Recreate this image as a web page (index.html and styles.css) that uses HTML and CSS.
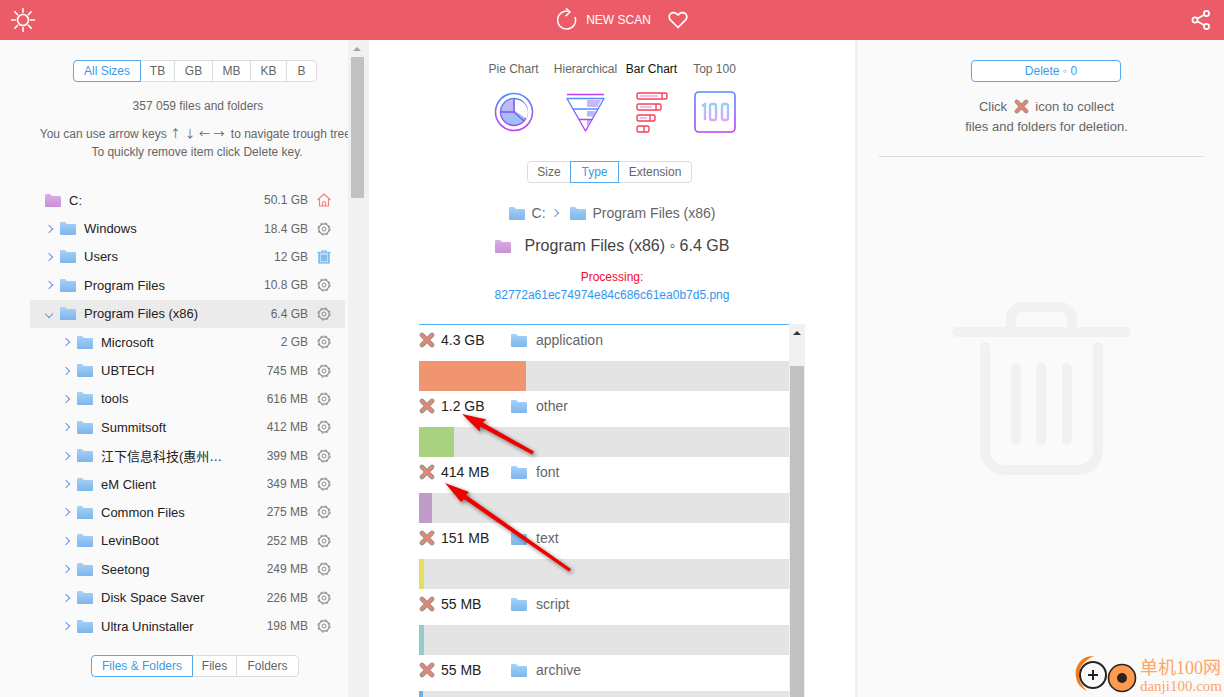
FILE: index.html
```html
<!DOCTYPE html>
<html lang="en">

<head>
    <meta charset="UTF-8">
    <meta name="viewport" content="width=device-width, initial-scale=1.0">
    <title>Disk Usage</title>
    <link rel="stylesheet" href="styles.css">
</head>

<body>
    <svg width="0" height="0" class="defs">
        <defs>
            <linearGradient id="folderBlue" x1="0" y1="0" x2="0" y2="1">
                <stop offset="0" stop-color="#a6d2f8" />
                <stop offset="1" stop-color="#7db5ec" />
            </linearGradient>
            <linearGradient id="folderPurple" x1="0" y1="0" x2="0" y2="1">
                <stop offset="0" stop-color="#dcb0e4" />
                <stop offset="1" stop-color="#c690d6" />
            </linearGradient>
            <linearGradient id="blueViolet" x1="0" y1="0" x2="0" y2="1">
                <stop offset="0" stop-color="#4f8dff" />
                <stop offset="1" stop-color="#c23cf2" />
            </linearGradient>
            <linearGradient id="fillSoft" x1="0" y1="0" x2="0" y2="1">
                <stop offset="0" stop-color="#d6b4f6" />
                <stop offset="1" stop-color="#8cc4fa" />
            </linearGradient>
            <linearGradient id="textSoft" x1="0" y1="0" x2="0" y2="1">
                <stop offset="0" stop-color="#8ed2fa" />
                <stop offset="1" stop-color="#dba8f6" />
            </linearGradient>
            <symbol id="folder" viewBox="0 0 16 13">
                <path d="M0 1a1 1 0 0 1 1-1h4l2 2h8a1 1 0 0 1 1 1v9a1 1 0 0 1-1 1H1a1 1 0 0 1-1-1z" />
            </symbol>
            <symbol id="gear" viewBox="0 0 14 14">
                <circle cx="7" cy="7" r="5.2" fill="none" stroke="#8c8c8c" stroke-width="1.2" />
                <circle cx="7" cy="7" r="6.1" fill="none" stroke="#8c8c8c" stroke-width="1" stroke-dasharray="2.4 2.4" />
                <circle cx="7" cy="7" r="2" fill="none" stroke="#8c8c8c" stroke-width="1" />
            </symbol>
            <symbol id="cross" viewBox="0 0 16 16">
                <path d="M3 3l10 10M13 3L3 13" stroke="#9a8f8d" stroke-width="4.6" stroke-linecap="round" fill="none" />
                <path d="M3 3l10 10M13 3L3 13" stroke="#e58672" stroke-width="2.8" stroke-linecap="round" fill="none" />
            </symbol>
        </defs>
    </svg>

    <header class="topbar">
        <svg class="sun" width="26" height="26" viewBox="0 0 26 26" fill="none" stroke="#fff" stroke-width="1.6" stroke-linecap="round">
            <circle cx="13" cy="13" r="5.5" />
            <path d="M13 1.5v4M13 20.5v4M1.5 13h4M20.5 13h4M4.9 4.9l2.8 2.8M18.3 18.3l2.8 2.8M4.9 21.100l2.8-2.8M18.3 7.700l2.8-2.8" />
        </svg>
        <div class="scan">
            <svg width="20" height="24" viewBox="0 0 20 24" fill="none" stroke="#fff" stroke-width="1.5" stroke-linecap="round" stroke-linejoin="round">
                <path d="M12 3.4A9 9 0 1 0 18.2 9.5" />
                <path d="M9.5 0.7L13 4L9 7.7" />
            </svg>
            <span>NEW SCAN</span>
            <svg class="heart" width="20" height="18" viewBox="0 0 20 18" fill="none" stroke="#fff" stroke-width="1.7" stroke-linejoin="round">
                <path d="M10 16.5L2.6 9.2C.6 7.2.8 4.3 2.6 2.7 4.5 1 7.5 1.2 10 4c2.5-2.8 5.5-3 7.4-1.3 1.8 1.6 2 4.5 0 6.5z" />
            </svg>
        </div>
        <svg class="share" width="20" height="20" viewBox="0 0 20 20" fill="none" stroke="#fff" stroke-width="1.7">
            <circle cx="15.5" cy="3.5" r="2.6" />
            <circle cx="4" cy="10" r="2.6" />
            <circle cx="15.5" cy="16.5" r="2.6" />
            <path d="M13.3 4.8L6.2 8.7M6.2 11.3l7.1 3.9" />
        </svg>
    </header>

    <main class="layout">
        <aside class="left">
            <div class="left-inner">
                <div class="group sizes">
                    <span class="seg active w68">All Sizes</span>
                    <span class="seg w34">TB</span>
                    <span class="seg w38">GB</span>
                    <span class="seg w38">MB</span>
                    <span class="seg w36">KB</span>
                    <span class="seg w30">B</span>
                </div>
                <p class="count">357 059 files and folders</p>
                <p class="hint">You can use arrow keys <span class="keys">↑ ↓ ← →</span> to navigate trough tree.<br>To quickly remove item click Delete key.</p>

                <div class="tree">
                    <div class="row root">
                        <svg class="folder"><use href="#folder" fill="url(#folderPurple)" /></svg>
                        <span class="name">C:</span><span class="size">50.1 GB</span>
                        <svg class="act" viewBox="0 0 14 14" fill="none" stroke="#f27f84" stroke-width="1.1">
                            <path d="M0.5 7L7 1l6.5 6M2.5 6v7h9V6M5.5 13V10a1.5 1.5 0 0 1 3 0v3" />
                        </svg>
                    </div>
                    <div class="row lvl1"><i class="chev"></i><svg class="folder"><use href="#folder" fill="url(#folderBlue)" /></svg><span class="name">Windows</span><span class="size">18.4 GB</span><svg class="act"><use href="#gear" /></svg></div>
                    <div class="row lvl1"><i class="chev"></i><svg class="folder"><use href="#folder" fill="url(#folderBlue)" /></svg><span class="name">Users</span><span class="size">12 GB</span>
                        <svg class="act" viewBox="0 0 14 14" fill="none" stroke="#5aa9ec" stroke-width="1.2">
                            <path d="M0.5 2.5h13M5 2.5V1h4v1.5" />
                            <path d="M2 2.5V13h10V2.5" fill="#bcdcf8" />
                            <path d="M5 5v6M7 5v6M9 5v6" />
                        </svg>
                    </div>
                    <div class="row lvl1"><i class="chev"></i><svg class="folder"><use href="#folder" fill="url(#folderBlue)" /></svg><span class="name">Program Files</span><span class="size">10.8 GB</span><svg class="act"><use href="#gear" /></svg></div>
                    <div class="row lvl1 selected"><i class="chev open"></i><svg class="folder"><use href="#folder" fill="url(#folderBlue)" /></svg><span class="name">Program Files (x86)</span><span class="size">6.4 GB</span><svg class="act"><use href="#gear" /></svg></div>
                    <div class="row lvl2"><i class="chev"></i><svg class="folder"><use href="#folder" fill="url(#folderBlue)" /></svg><span class="name">Microsoft</span><span class="size">2 GB</span><svg class="act"><use href="#gear" /></svg></div>
                    <div class="row lvl2"><i class="chev"></i><svg class="folder"><use href="#folder" fill="url(#folderBlue)" /></svg><span class="name">UBTECH</span><span class="size">745 MB</span><svg class="act"><use href="#gear" /></svg></div>
                    <div class="row lvl2"><i class="chev"></i><svg class="folder"><use href="#folder" fill="url(#folderBlue)" /></svg><span class="name">tools</span><span class="size">616 MB</span><svg class="act"><use href="#gear" /></svg></div>
                    <div class="row lvl2"><i class="chev"></i><svg class="folder"><use href="#folder" fill="url(#folderBlue)" /></svg><span class="name">Summitsoft</span><span class="size">412 MB</span><svg class="act"><use href="#gear" /></svg></div>
                    <div class="row lvl2"><i class="chev"></i><svg class="folder"><use href="#folder" fill="url(#folderBlue)" /></svg><span class="name cjk">江下信息科技(惠州…</span><span class="size">399 MB</span><svg class="act"><use href="#gear" /></svg></div>
                    <div class="row lvl2"><i class="chev"></i><svg class="folder"><use href="#folder" fill="url(#folderBlue)" /></svg><span class="name">eM Client</span><span class="size">349 MB</span><svg class="act"><use href="#gear" /></svg></div>
                    <div class="row lvl2"><i class="chev"></i><svg class="folder"><use href="#folder" fill="url(#folderBlue)" /></svg><span class="name">Common Files</span><span class="size">275 MB</span><svg class="act"><use href="#gear" /></svg></div>
                    <div class="row lvl2"><i class="chev"></i><svg class="folder"><use href="#folder" fill="url(#folderBlue)" /></svg><span class="name">LevinBoot</span><span class="size">252 MB</span><svg class="act"><use href="#gear" /></svg></div>
                    <div class="row lvl2"><i class="chev"></i><svg class="folder"><use href="#folder" fill="url(#folderBlue)" /></svg><span class="name">Seetong</span><span class="size">249 MB</span><svg class="act"><use href="#gear" /></svg></div>
                    <div class="row lvl2"><i class="chev"></i><svg class="folder"><use href="#folder" fill="url(#folderBlue)" /></svg><span class="name">Disk Space Saver</span><span class="size">226 MB</span><svg class="act"><use href="#gear" /></svg></div>
                    <div class="row lvl2"><i class="chev"></i><svg class="folder"><use href="#folder" fill="url(#folderBlue)" /></svg><span class="name">Ultra Uninstaller</span><span class="size">198 MB</span><svg class="act"><use href="#gear" /></svg></div>
                </div>

                <div class="group kinds">
                    <span class="seg active w102">Files &amp; Folders</span>
                    <span class="seg w44">Files</span>
                    <span class="seg w62">Folders</span>
                </div>
            </div>
        </aside>

        <div class="vscroll tree-scroll">
            <span class="up"></span>
            <span class="thumb"></span>
        </div>

        <section class="center">
            <div class="charts">
                <div class="chart w72">
                    <span>Pie Chart</span>
                    <svg width="42" height="42" viewBox="0 0 42 42" fill="none">
                        <circle cx="21" cy="21" r="18.5" stroke="url(#blueViolet)" stroke-width="1.6" />
                        <circle cx="21" cy="21" r="13.5" fill="url(#fillSoft)" stroke="url(#blueViolet)" stroke-width="1.4" />
                        <path d="M22 8.5a13 13 0 0 1 11.500 19L22 20z" fill="#fff" />
                        <path d="M21 7.5V21H7.5M21 21l10 9" stroke="#7a58ee" stroke-width="1.4" />
                    </svg>
                </div>
                <div class="chart w72">
                    <span>Hierarchical</span>
                    <svg width="42" height="42" viewBox="0 0 42 42" fill="none">
                        <path d="M2 3.5h37" stroke="#c23cf2" stroke-width="1.4" />
                        <path d="M22 9h14l-3.500 7H22zM22 20h8.500l-2.500 5.500H22zM22 28h4l-3 6h-1z" fill="url(#fillSoft)" />
                        <path d="M2 7.5h37L20.5 40z" stroke="url(#blueViolet)" stroke-width="1.4" stroke-linejoin="round" />
                        <path d="M8 18h25M14 28.5h13" stroke="url(#blueViolet)" stroke-width="1.4" />
                    </svg>
                </div>
                <div class="chart w60">
                    <span class="on">Bar Chart</span>
                    <svg width="32" height="42" viewBox="0 0 32 42" fill="none" stroke="#f8405a" stroke-width="1.4">
                        <rect x="1" y="2" width="30" height="6" rx="1.5" />
                        <path d="M26 2v6" />
                        <path d="M4 5h18" stroke="#f0a0e8" />
                        <rect x="1" y="13" width="24" height="6" rx="1.5" />
                        <path d="M20 13v6" />
                        <path d="M4 16h12" stroke="#f0a0e8" />
                        <rect x="1" y="24" width="18" height="6" rx="1.5" />
                        <path d="M14 24v6" />
                        <path d="M4 27h7" stroke="#f0a0e8" />
                        <rect x="1" y="35" width="12" height="6" rx="1.5" />
                        <path d="M8 35v6" />
                    </svg>
                </div>
                <div class="chart w66">
                    <span>Top 100</span>
                    <svg width="42" height="42" viewBox="0 0 42 42" fill="none">
                        <rect x="1" y="1" width="40" height="40" rx="4" stroke="url(#blueViolet)" stroke-width="1.6" />
                        <path d="M8 15l3-2v16M18 13h2a2 2 0 0 1 2 2v12a2 2 0 0 1-2 2h-2a2 2 0 0 1-2-2V15a2 2 0 0 1 2-2zM30 13h2a2 2 0 0 1 2 2v12a2 2 0 0 1-2 2h-2a2 2 0 0 1-2-2V15a2 2 0 0 1 2-2z" stroke="url(#textSoft)" stroke-width="2.4" />
                    </svg>
                </div>
            </div>

            <div class="group modes">
                <span class="seg w43">Size</span>
                <span class="seg active w48">Type</span>
                <span class="seg w73">Extension</span>
            </div>

            <div class="crumbs">
                <svg class="folder"><use href="#folder" fill="url(#folderBlue)" /></svg>
                <span class="crumb-c">C:</span>
                <i class="chev"></i>
                <svg class="folder"><use href="#folder" fill="url(#folderBlue)" /></svg>
                <span>Program Files (x86)</span>
            </div>
            <h2 class="title">
                <svg class="folder"><use href="#folder" fill="url(#folderPurple)" /></svg>
                <span>Program Files (x86) ◦ 6.4 GB</span>
            </h2>
            <p class="processing">Processing:</p>
            <p class="filename">82772a61ec74974e84c686c61ea0b7d5.png</p>

            <div class="listwrap">
                <div class="list">
                    <div class="item"><svg class="x"><use href="#cross" /></svg><span class="amount">4.3 GB</span><svg class="folder"><use href="#folder" fill="url(#folderBlue)" /></svg><span class="kind">application</span></div>
                    <div class="bar"><div class="fill c1"></div></div>
                    <div class="item"><svg class="x"><use href="#cross" /></svg><span class="amount">1.2 GB</span><svg class="folder"><use href="#folder" fill="url(#folderBlue)" /></svg><span class="kind">other</span></div>
                    <div class="bar"><div class="fill c2"></div></div>
                    <div class="item"><svg class="x"><use href="#cross" /></svg><span class="amount">414 MB</span><svg class="folder"><use href="#folder" fill="url(#folderBlue)" /></svg><span class="kind">font</span></div>
                    <div class="bar"><div class="fill c3"></div></div>
                    <div class="item"><svg class="x"><use href="#cross" /></svg><span class="amount">151 MB</span><svg class="folder"><use href="#folder" fill="url(#folderBlue)" /></svg><span class="kind">text</span></div>
                    <div class="bar"><div class="fill c4"></div></div>
                    <div class="item"><svg class="x"><use href="#cross" /></svg><span class="amount">55 MB</span><svg class="folder"><use href="#folder" fill="url(#folderBlue)" /></svg><span class="kind">script</span></div>
                    <div class="bar"><div class="fill c5"></div></div>
                    <div class="item"><svg class="x"><use href="#cross" /></svg><span class="amount">55 MB</span><svg class="folder"><use href="#folder" fill="url(#folderBlue)" /></svg><span class="kind">archive</span></div>
                    <div class="bar"><div class="fill c6"></div></div>
                </div>
                <div class="vscroll list-scroll">
                    <span class="up"></span>
                    <span class="thumb"></span>
                </div>
            </div>
        </section>

        <div class="divider"></div>

        <aside class="right">
            <button class="delete">Delete ◦ 0</button>
            <p class="collect">Click <svg class="x inline"><use href="#cross" /></svg> icon to collect<br>files and folders for deletion.</p>
            <hr class="rule">
            <svg class="bin" width="180" height="175" viewBox="0 0 180 175" fill="none" stroke="#f1f1f1" stroke-width="10" stroke-linecap="round">
                <path d="M5 30H174" />
                <path d="M59 27V17a12 12 0 0 1 12-12h37a12 12 0 0 1 12 12v10" />
                <path d="M33 45v103a20 20 0 0 0 20 20h73a20 20 0 0 0 20-20V45" />
                <path d="M64 66v72M89 66v72M115 66v72" />
            </svg>
        </aside>
    </main>

    <!-- red arrows drawn over the screenshot -->
    <svg class="arrows" width="1224" height="697" viewBox="0 0 1224 697">
        <path d="M462 414L486.4 419.4L482.6 422.5L534 451.4L532.2 454.6L480.2 426.6L479.6 431.6z" fill="#f20000" />
        <path d="M445 483L469 492L466 495L571 569L569 571.5L464 499L461 502z" fill="#f20000" />
    </svg>

    <div class="mark">
        <svg width="64" height="42" viewBox="0 0 64 42" fill="none">
            <path d="M19 1C6 0-1 12 1 22c1 7 5 11 11 14-5-5-8-10-8-16 0-9 6-15 15-19z" fill="#f47a16" />
            <circle cx="18" cy="20" r="13" stroke="#2a2320" stroke-width="2" />
            <path d="M18 15v10M13 20h10" stroke="#2a2320" stroke-width="2" />
            <circle cx="47" cy="23" r="13.5" fill="#ff9a4f" stroke="#2a2320" stroke-width="1.6" />
            <circle cx="47" cy="23" r="5" fill="#2a2320" />
        </svg>
        <div class="mark-text">
            <span class="mark-cn">单机100网</span>
            <span class="mark-en">danji100.com</span>
        </div>
    </div>
</body>

</html>
```

FILE: styles.css
```css
* {
    box-sizing: border-box;
}

html,
body {
    margin: 0;
    height: 100%;
    overflow: hidden;
}

body {
    font-family: "Liberation Sans", Arial, "Noto Sans CJK SC", sans-serif;
    font-size: 12px;
    color: #666;
    background: #fff;
}

p {
    margin: 0;
}

.defs {
    position: absolute;
}

/* top bar */
.topbar {
    height: 40px;
    background-color: #ec5c68;
    display: flex;
    align-items: center;
    justify-content: space-between;
    padding: 0 10px;
}

.scan {
    display: flex;
    align-items: center;
    color: #fff;
    font-size: 12px;
    margin-left: 18px;
}

.scan span {
    margin: 0 17px 0 9px;
}

.share {
    margin: 0 3px 1px 0;
}

/* columns */
.layout {
    display: flex;
    height: 657px;
}

.left {
    width: 348px;
    background: #fafafa;
    overflow: hidden;
    flex: none;
}

.left-inner {
    margin-left: 30px;
    width: 315px;
    padding-top: 20px;
}

.group {
    display: flex;
    height: 22px;
    width: fit-content;
    border-radius: 4px;
    background: #fff;
}

.seg {
    display: flex;
    align-items: center;
    justify-content: center;
    border: 1px solid #ddd;
    margin-left: -1px;
}

.seg:first-child {
    margin-left: 0;
    border-radius: 4px 0 0 4px;
}

.seg:last-child {
    border-radius: 0 4px 4px 0;
}

.seg.active {
    color: #3d9ae8;
    border-color: #55a9ee;
    position: relative;
}

.w30 { width: 31px; }
.w34 { width: 35px; }
.w36 { width: 37px; }
.w38 { width: 39px; }
.w43 { width: 44px; }
.w44 { width: 45px; }
.w48 { width: 49px; }
.w62 { width: 63px; }
.w68 { width: 68px; }
.w73 { width: 74px; }
.w102 { width: 102px; }

.sizes {
    margin-left: 43px;
}

.count {
    width: 336px;
    text-align: center;
    margin-top: 17px;
    line-height: 14px;
}

.hint {
    width: 334px;
    text-align: center;
    white-space: nowrap;
    margin-top: 11px;
    line-height: 18px;
}

.keys {
    font-family: "Noto Sans CJK SC", sans-serif;
    font-size: 11px;
    word-spacing: 1px;
    margin-right: 3px;
}

/* tree */
.tree {
    margin-top: 25px;
}

.row {
    display: flex;
    align-items: center;
    height: 28.4px;
    color: #222;
    font-size: 13px;
}

.row.selected {
    background: #ebebeb;
}

.folder {
    width: 16px;
    height: 13px;
    flex: none;
}

.name {
    flex: 1;
    white-space: nowrap;
    overflow: hidden;
}

.size {
    font-size: 12px;
    color: #666;
}

.act {
    width: 14px;
    height: 14px;
    margin: 0 14px 0 9px;
    flex: none;
}

.root {
    padding-left: 15px;
}

.root .name {
    margin-left: 8px;
}

.lvl1 {
    padding-left: 16px;
}

.lvl2 {
    padding-left: 33px;
}

.lvl1 .folder,
.lvl2 .folder {
    margin-left: 6px;
}

.lvl1 .name,
.lvl2 .name {
    margin-left: 8px;
}

.cjk {
    font-family: "Liberation Sans", "Noto Sans CJK SC", sans-serif;
}

.chev {
    display: block;
    width: 6px;
    height: 6px;
    margin-right: 2px;
    border-top: 1px solid #6b94e0;
    border-right: 1px solid #6b94e0;
    transform: rotate(45deg);
    flex: none;
}

.chev.open {
    transform: rotate(135deg);
}

.kinds {
    margin: 15px 0 0 61px;
}

/* scrollbars */
.vscroll {
    background: #f1f1f1;
    flex: none;
    display: flex;
    flex-direction: column;
    align-items: center;
}

.up {
    width: 0;
    height: 0;
    border-left: 4px solid transparent;
    border-right: 4px solid transparent;
    border-bottom: 4px solid #a3a3a3;
}

.thumb {
    display: block;
    background: #c1c1c1;
}

.tree-scroll {
    width: 21px;
    padding-top: 7px;
}

.tree-scroll .thumb {
    width: 13px;
    height: 141px;
    margin: 6px 3px 0 0;
}

.tree-scroll .up {
    margin-right: 3px;
}

.list-scroll {
    width: 16px;
    padding-top: 7px;
}

.list-scroll .up {
    border-bottom-color: #333;
}

.list-scroll .thumb {
    width: 14px;
    flex: 1;
    margin-top: 31px;
}

/* center */
.center {
    width: 486px;
    flex: none;
    background: #fff;
    display: flex;
    flex-direction: column;
    align-items: center;
    overflow: hidden;
}

.charts {
    display: flex;
    margin-top: 22px;
    margin-left: 1px;
}

.chart {
    display: flex;
    flex-direction: column;
    align-items: center;
    white-space: nowrap;
    line-height: 14px;
}

.chart span.on {
    color: #111;
}

.chart svg {
    margin-top: 15px;
}

.chart.w72 { width: 72px; }
.chart.w60 { width: 60px; }
.chart.w66 { width: 66px; }

.modes {
    margin: 28px 0 0 -5px;
}

.crumbs {
    display: flex;
    align-items: center;
    font-size: 14px;
    margin-top: 21px;
    height: 18px;
    margin-left: 0;
}

.crumb-c {
    margin: 0 7px;
}

.crumbs .chev {
    margin-right: 12px;
    margin-left: -1px;
}

.crumbs .folder + span:last-child {
    margin-left: 7px;
}

.title {
    display: flex;
    align-items: center;
    font-size: 16px;
    font-weight: normal;
    color: #444;
    margin: 15px 0 0;
    height: 18px;
}

.title span {
    margin-left: 14px;
}

.processing {
    color: #fa0a2a;
    margin-top: 15px;
    line-height: 14px;
}

.filename {
    color: #2f96ee;
    margin-top: 4px;
    line-height: 14px;
}

.listwrap {
    display: flex;
    width: 386px;
    margin-top: 22px;
    flex: 1;
    min-height: 0;
    align-self: flex-start;
    margin-left: 50px;
}

.list {
    width: 370px;
    border-top: 1px solid #55b0f5;
    overflow: hidden;
}

.item {
    display: flex;
    align-items: center;
    height: 36px;
    padding-bottom: 6px;
    font-size: 14px;
}

.x {
    width: 16px;
    height: 16px;
    flex: none;
}

.amount {
    width: 70px;
    margin-left: 6px;
    color: #222;
}

.kind {
    margin-left: 9px;
}

.bar {
    height: 30px;
    background: #e4e4e4;
}

.fill {
    height: 100%;
}

.c1 { width: 107px; background: #f09570; }
.c2 { width: 35px; background: #a8d280; }
.c3 { width: 13px; background: #bf9dc8; }
.c4 { width: 5px; background: #e3e05c; }
.c5 { width: 5px; background: #93cbca; }
.c6 { width: 4px; background: #64b5f6; }

.divider {
    width: 3px;
    background: #f1f1f1;
    flex: none;
}

/* right */
.right {
    flex: 1;
    background: #fafafa;
    display: flex;
    flex-direction: column;
    align-items: center;
    padding-top: 20px;
}

.delete {
    width: 150px;
    height: 22px;
    font: inherit;
    color: #3d9ae8;
    background: #fff;
    border: 1px solid #55a9ee;
    border-radius: 4px;
    padding: 0 0 0 10px;
    margin-left: 10px;
}

.collect {
    margin-top: 15px;
    margin-left: 11px;
    text-align: center;
    font-size: 13px;
    line-height: 20px;
}

.x.inline {
    width: 15px;
    height: 15px;
    vertical-align: -3px;
    margin: 0 3px;
}

.rule {
    width: 325px;
    border: none;
    border-top: 1px solid #ddd;
    margin: 19px 0 0;
}

.bin {
    margin-top: 145px;
    margin-left: 2px;
}

/* overlays */
.arrows {
    position: absolute;
    left: 0;
    top: 0;
    filter: drop-shadow(2px 2px 2px rgba(0, 0, 0, 0.5));
    pointer-events: none;
}

.mark {
    position: absolute;
    right: 2px;
    bottom: 0;
    display: flex;
    align-items: center;
    gap: 1px;
}

.mark-text {
    display: flex;
    flex-direction: column;
    font-family: "Liberation Serif", "Noto Sans CJK SC", serif;
    color: #ffa468;
}

.mark-cn {
    font-size: 18px;
    line-height: 20px;
}

.mark-en {
    font-size: 15px;
    line-height: 16px;
}
```
